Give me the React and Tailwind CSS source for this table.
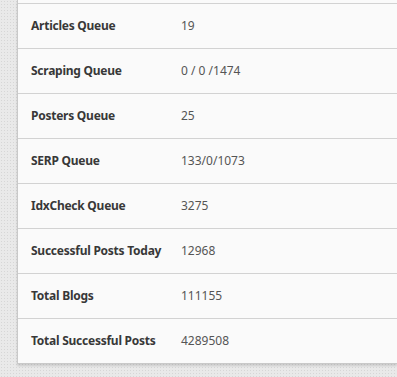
const ROWS = [
  ["Articles Queue", "19"],
  ["Scraping Queue", "0 / 0 /1474"],
  ["Posters Queue", "25"],
  ["SERP Queue", "133/0/1073"],
  ["IdxCheck Queue", "3275"],
  ["Successful Posts Today", "12968"],
  ["Total Blogs", "111155"],
  ["Total Successful Posts", "4289508"],
];

export default function App() {
  return (
    <div
      className="h-[377px] w-[397px] overflow-hidden bg-[#e9e9e9] pl-[17px] bg-[image:radial-gradient(#d6d6d6_0.6px,transparent_0.8px)] bg-[size:3px_3px]"
      style={{ fontFamily: '"Noto Sans", "Open Sans", sans-serif' }}
    >
      {/* panel de estatísticas */}
      <div className="bg-[#fafafa] border-l border-b border-[#c9c9c9] shadow-[0_2px_2px_rgba(0,0,0,0.12)]">
        <div className="h-[3px]" />
        {ROWS.map(([label, value]) => (
          <div key={label} className="flex items-center h-[45px] border-t border-[#d2d2d2]">
            <div className="w-[163px] pl-[13px] text-[12px] font-bold tracking-[-0.25px] text-[#383838] whitespace-nowrap">
              {label}
            </div>
            <div className="text-[12px] text-[#555] whitespace-nowrap">{value}</div>
          </div>
        ))}
      </div>
    </div>
  );
}
